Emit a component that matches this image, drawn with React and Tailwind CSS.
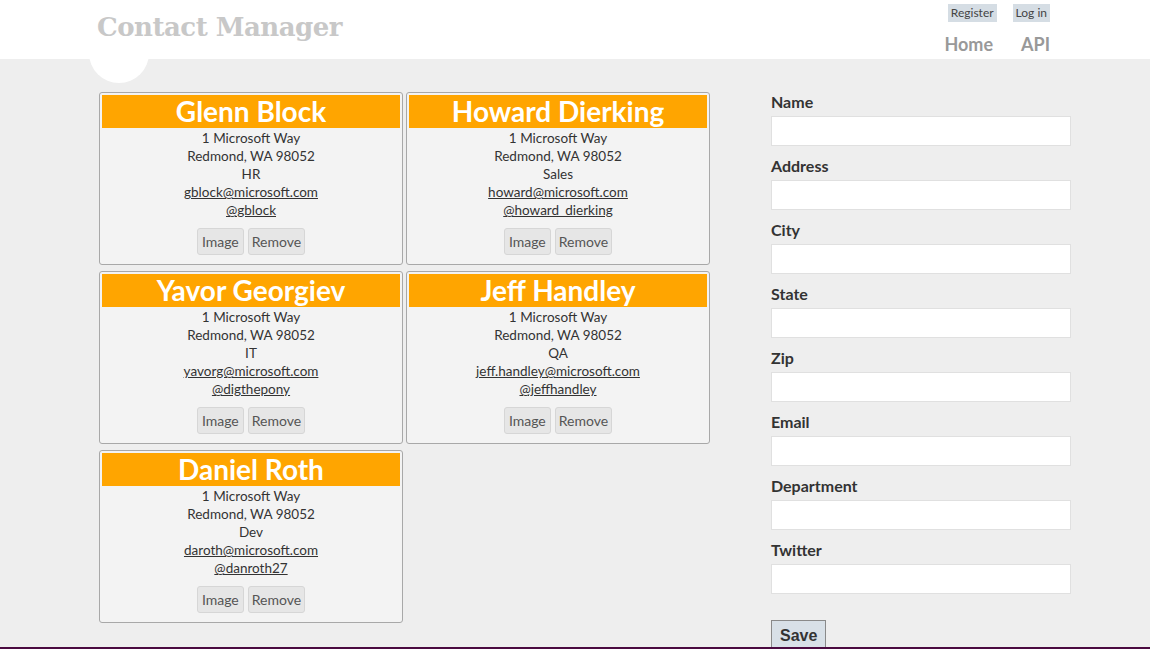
import React from 'react'

const contacts = [
  { name: 'Glenn Block', dept: 'HR', email: 'gblock@microsoft.com', twitter: '@gblock' },
  { name: 'Howard Dierking', dept: 'Sales', email: 'howard@microsoft.com', twitter: '@howard_dierking' },
  { name: 'Yavor Georgiev', dept: 'IT', email: 'yavorg@microsoft.com', twitter: '@digthepony' },
  { name: 'Jeff Handley', dept: 'QA', email: 'jeff.handley@microsoft.com', twitter: '@jeffhandley' },
  { name: 'Daniel Roth', dept: 'Dev', email: 'daroth@microsoft.com', twitter: '@danroth27' }
]

const fields = ['Name', 'Address', 'City', 'State', 'Zip', 'Email', 'Department', 'Twitter']

const ContactCard = ({ contact }) => (
  <div className="w-[304px] h-[173px] border border-[#a8a8a8] rounded-[3px] bg-[#f3f3f3] p-[2px]">
    <div className="h-[33px] bg-[#ffa500] text-white text-[28px] font-bold leading-[33px] text-center">
      {contact.name}
    </div>
    <div className="text-center text-[13.5px] leading-[18px] text-[#333] pt-[1px]">
      <div>1 Microsoft Way</div>
      <div>Redmond, WA 98052</div>
      <div>{contact.dept}</div>
      <div><a className="underline">{contact.email}</a></div>
      <div><a className="underline">{contact.twitter}</a></div>
    </div>
    <div className="flex justify-center gap-[4px] mt-[9px]">
      <button className="h-[27px] px-[4px] bg-[#e6e6e6] border border-[#d6d6d6] rounded-[3px] text-[14px] text-[#555]">Image</button>
      <button className="h-[27px] px-[3px] bg-[#e6e6e6] border border-[#d6d6d6] rounded-[3px] text-[14px] text-[#555]">Remove</button>
    </div>
  </div>
)

export default function App() {
  return (
    <div className="min-h-[649px] bg-[#eeeeee] font-['Lato',sans-serif]">
      <header className="relative h-[59px] bg-white">
        <div className="absolute left-[89px] top-[23px] w-[60px] h-[60px] rounded-full bg-white" />
        <div className="relative w-[960px] mx-auto flex justify-between">
          <h1 className="pl-[2px] pt-[8px] text-[26px] font-bold text-[#c8c8c8] font-['DejaVu_Serif',serif] tracking-[-0.5px]">
            Contact Manager
          </h1>
          <div className="flex flex-col items-end pr-[5px]">
            <div className="flex gap-[16px] mt-[4px] text-[12px] text-[#444]">
              <span className="bg-[#d5dde4] px-[3px] leading-[18px]">Register</span>
              <span className="bg-[#d5dde4] px-[3px] leading-[18px]">Log in</span>
            </div>
            <nav className="flex gap-[28px] mt-[11px] text-[18px] font-bold text-[#999] leading-[22px]">
              <span>Home</span>
              <span>API</span>
            </nav>
          </div>
        </div>
      </header>

      <main className="flex pl-[99px] pt-[33px]">
        <div className="w-[611px] shrink-0 flex flex-wrap gap-x-[3px] gap-y-[6px] content-start">
          {contacts.map((c) => (
            <ContactCard key={c.name} contact={c} />
          ))}
        </div>
        <form className="ml-[61px] w-[300px] shrink-0 flex flex-col">
          {fields.map((f) => (
            <div key={f} className="mb-[10px]">
              <label className="block text-[16px] font-bold text-[#333] leading-[20px] mb-[4px]">{f}</label>
              <input className="block w-[300px] h-[30px] bg-white border border-[#e0e0e0]" />
            </div>
          ))}
          <div>
            <button type="button" className="mt-[16px] h-[32px] px-[8px] bg-[#d8e0e7] border border-[#8a8a8a] text-[16px] font-bold text-[#333] font-['Liberation_Sans',sans-serif]">
              Save
            </button>
          </div>
        </form>
      </main>
      <div className="fixed bottom-0 left-0 right-0 h-[2px] bg-[#4a0a40]" />
    </div>
  )
}
